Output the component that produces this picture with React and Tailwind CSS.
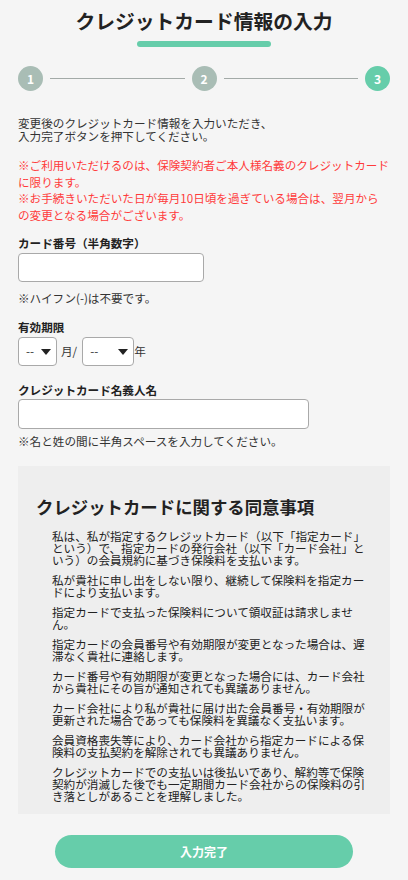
import { useState } from 'react'

const consentItems = [
  ['私は、私が指定するクレジットカード（以下「指定カード」', 'という）で、指定カードの発行会社（以下「カード会社」と', 'いう）の会員規約に基づき保険料を支払います。'],
  ['私が貴社に申し出をしない限り、継続して保険料を指定カー', 'ドにより支払います。'],
  ['指定カードで支払った保険料について領収証は請求しませ', 'ん。'],
  ['指定カードの会員番号や有効期限が変更となった場合は、遅', '滞なく貴社に連絡します。'],
  ['カード番号や有効期限が変更となった場合には、カード会社', 'から貴社にその旨が通知されても異議ありません。'],
  ['カード会社により私が貴社に届け出た会員番号・有効期限が', '更新された場合であっても保険料を異議なく支払います。'],
  ['会員資格喪失等により、カード会社から指定カードによる保', '険料の支払契約を解除されても異議ありません。'],
  ['クレジットカードでの支払いは後払いであり、解約等で保険', '契約が消滅した後でも一定期間カード会社からの保険料の引', 'き落としがあることを理解しました。'],
]

function Caret() {
  return (
    <svg viewBox="0 0 10 6" className="h-[6px] w-[10px]" fill="#222">
      <path d="M0 0h10L5 6z" />
    </svg>
  )
}

function Step({ n, active }) {
  return (
    <div
      className={`flex h-[25px] w-[25px] shrink-0 items-center justify-center rounded-full text-[12px] font-bold text-white ${
        active ? 'bg-[#66cdaa]' : 'bg-[#a9bdb5]'
      }`}
    >
      {n}
    </div>
  )
}

export default function App() {
  const [cardNo, setCardNo] = useState('')
  const [holder, setHolder] = useState('')

  return (
    <div className="min-h-screen bg-[#f5f5f5] pb-8 font-['Noto_Sans_CJK_JP','Noto_Sans',sans-serif] text-[#333]">
      <div className="px-[18px]">
        <h1 className="pt-[6px] text-center text-[19.8px] font-bold leading-[30px] text-[#222]">
          クレジットカード情報の入力
        </h1>
        <div className="mx-auto mt-[5px] h-[6px] w-[134px] rounded-full bg-[#66cdaa]" />

        <div className="mt-[19px] flex items-center">
          <Step n="1" />
          <div className="mx-[7px] h-px flex-1 bg-[#a3aaa7]" />
          <Step n="2" />
          <div className="mx-[7px] h-px flex-1 bg-[#a3aaa7]" />
          <Step n="3" active />
        </div>

        <p className="mt-[26px] text-[11.6px] leading-[13px]">
          変更後のクレジットカード情報を入力いただき、
          <br />
          入力完了ボタンを押下してください。
        </p>

        <p className="mt-[14px] text-[11.6px] leading-[16.5px] text-[#ff3b3b]">
          ※ご利用いただけるのは、保険契約者ご本人様名義のクレジットカード
          <br />
          に限ります。
          <br />
          ※お手続きいただいた日が毎月10日頃を過ぎている場合は、翌月から
          <br />
          の変更となる場合がございます。
        </p>

        <label className="mt-[12px] block text-[11.6px] font-bold leading-[16px] text-[#222]">カード番号（半角数字）</label>
        <input
          value={cardNo}
          onChange={(e) => setCardNo(e.target.value)}
          className="mt-[2px] block h-[29px] w-[186px] rounded-[4px] border border-[#a9a9a9] bg-white px-2 text-[12px] outline-none"
        />
        <p className="mt-[8px] text-[11.6px] leading-[16px]">※ハイフン(-)は不要です。</p>

        <label className="mt-[13px] block text-[11.6px] font-bold leading-[16px] text-[#222]">有効期限</label>
        <div className="mt-[2px] flex items-center text-[11.6px]">
          <div className="flex h-[29px] w-[39px] items-center justify-between rounded-[4px] border border-[#a9a9a9] bg-white pl-[7px] pr-[5px]">
            <span>--</span>
            <Caret />
          </div>
          <span className="ml-[4px] mr-[5px]">月/</span>
          <div className="flex h-[29px] w-[52px] items-center justify-between rounded-[4px] border border-[#a9a9a9] bg-white pl-[7px] pr-[5px]">
            <span>--</span>
            <Caret />
          </div>
          <span>年</span>
        </div>

        <label className="mt-[16px] block text-[11.6px] font-bold leading-[16px] text-[#222]">クレジットカード名義人名</label>
        <input
          value={holder}
          onChange={(e) => setHolder(e.target.value)}
          className="mt-[1px] block h-[30px] w-[291px] rounded-[4px] border border-[#a9a9a9] bg-white px-2 text-[12px] outline-none"
        />
        <p className="mt-[4px] text-[11.6px] leading-[16px]">※名と姓の間に半角スペースを入力してください。</p>

        <section className="mt-[17px] bg-[#eeeeee] pb-[12px] pl-[18px] pt-[28px]">
          <h2 className="text-[17.4px] font-bold leading-[26px] text-[#222]">クレジットカードに関する同意事項</h2>
          <ul className="mt-[10px] flex flex-col gap-[8px] pl-[16px] text-[11.6px] leading-[12px] text-[#222]">
            {consentItems.map((lines, i) => (
              <li key={i}>
                {lines.map((l, j) => (
                  <span key={j} className="block">
                    {l}
                  </span>
                ))}
              </li>
            ))}
          </ul>
        </section>

        <button
          type="button"
          className="mx-auto mt-[21px] flex h-[33px] w-[298px] items-center justify-center rounded-full bg-[#66cdaa] text-[12px] font-bold text-white"
        >
          入力完了
        </button>
      </div>
    </div>
  )
}
